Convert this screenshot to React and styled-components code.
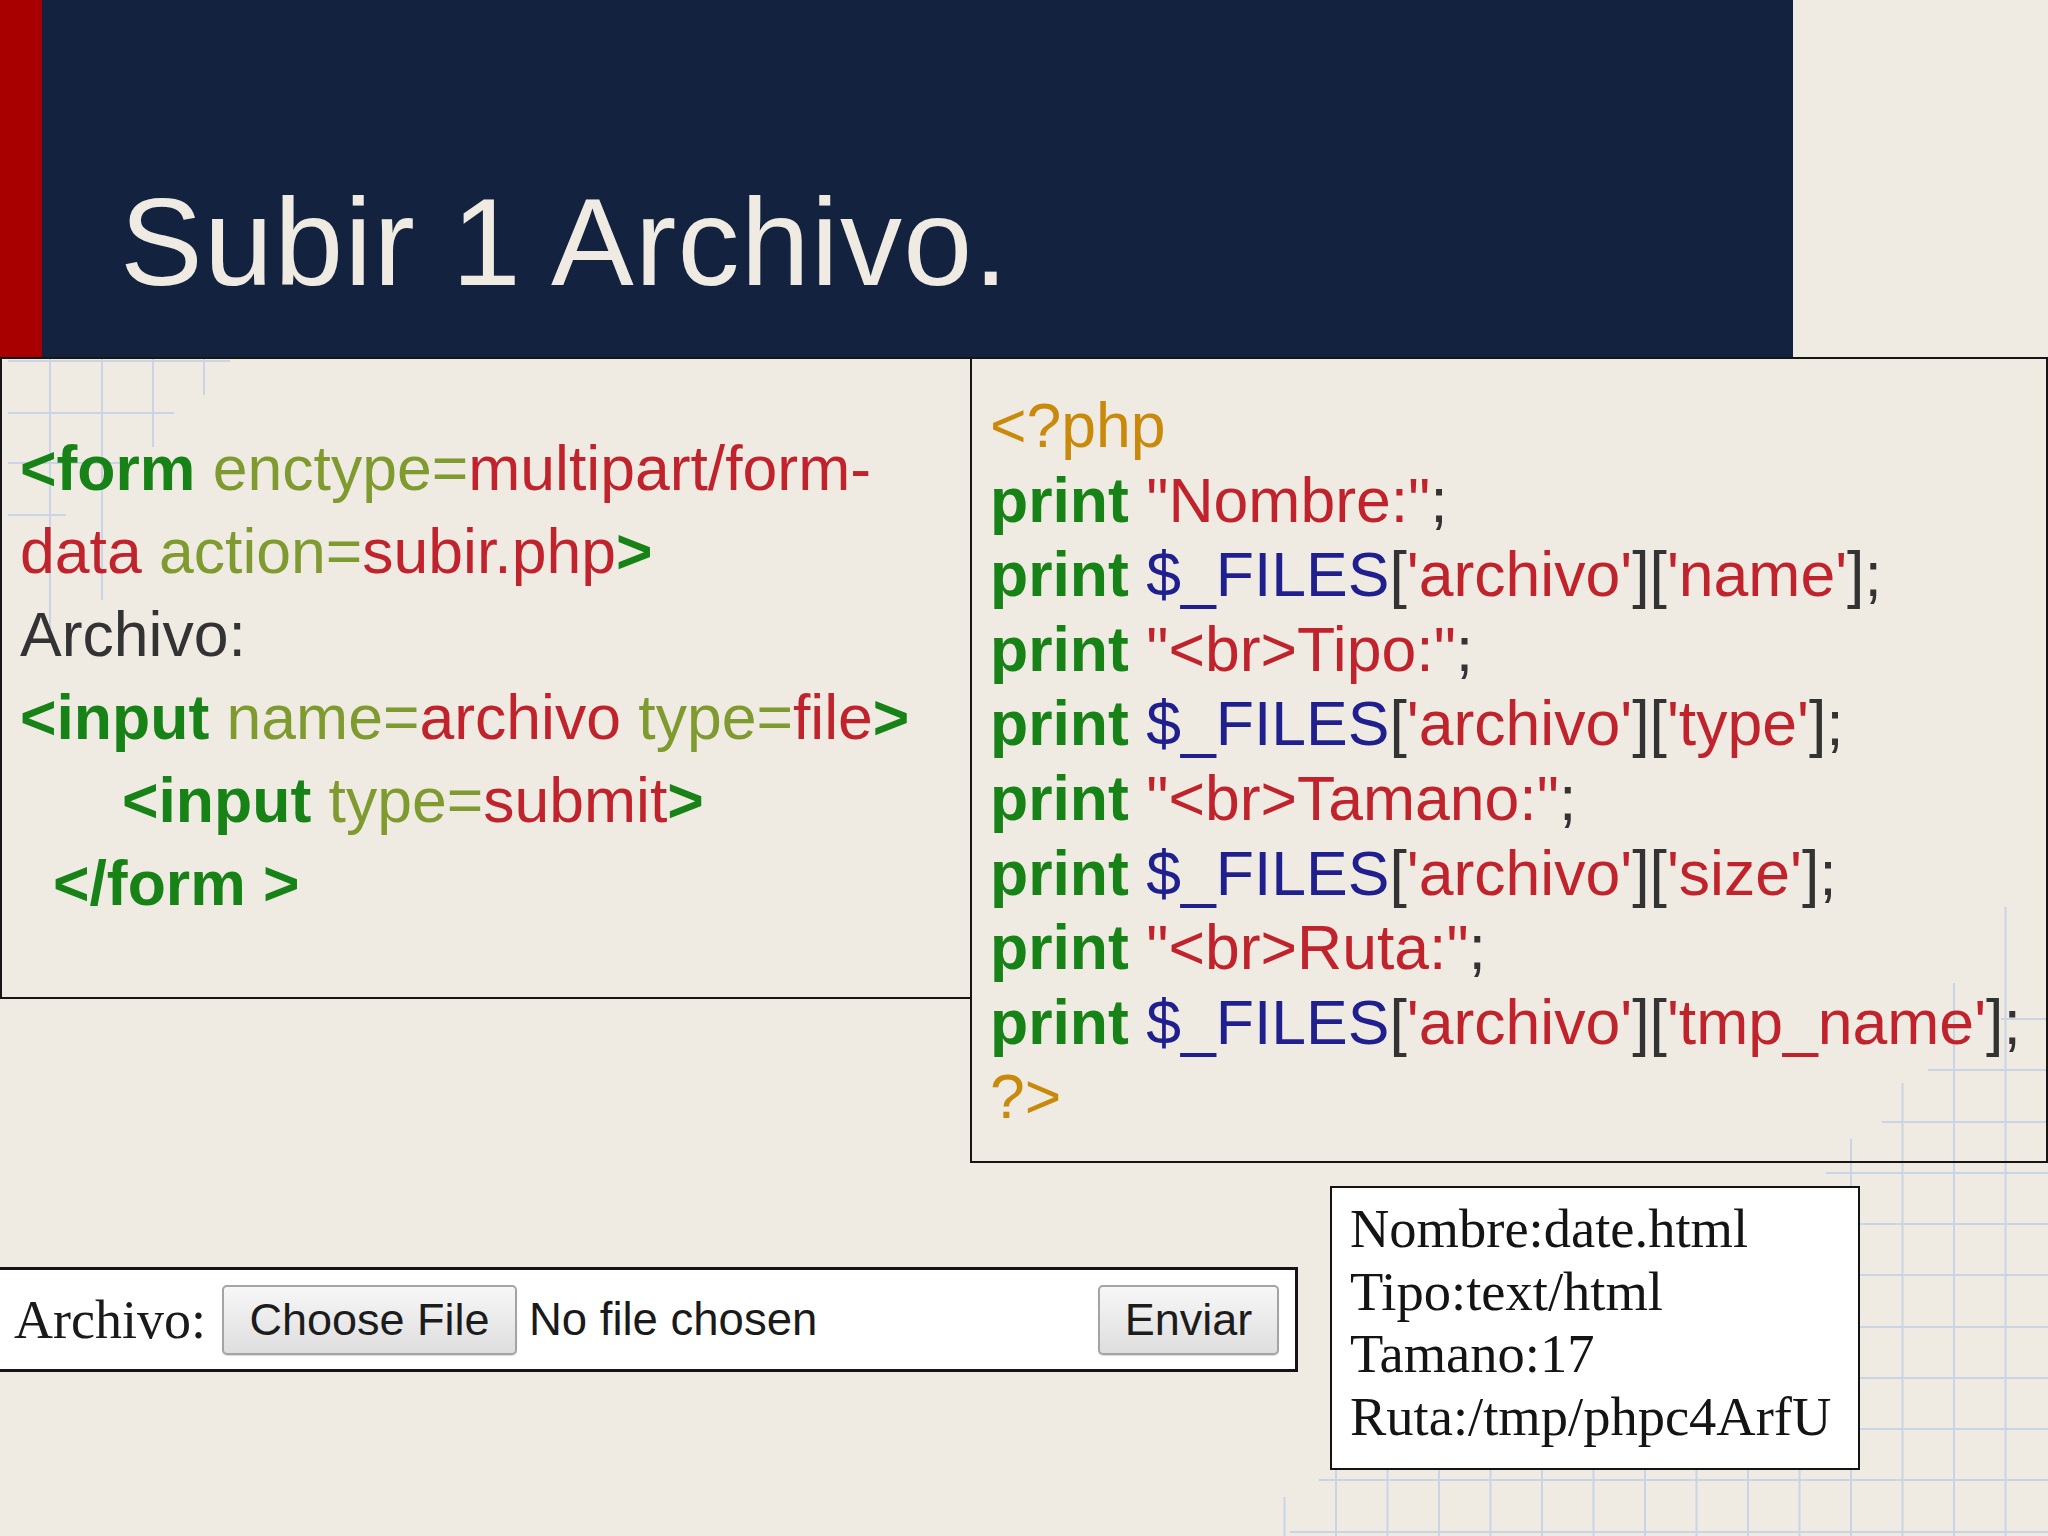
import React from 'react'
import styled, { createGlobalStyle } from 'styled-components'

const GlobalStyle = createGlobalStyle`
  html, body {
    margin: 0;
    padding: 0;
  }
  body {
    background: #efebe3;
    overflow: hidden;
  }
`

const Slide = styled.div`
  position: relative;
  width: 2048px;
  height: 1536px;
  overflow: hidden;
  background: #efebe3;
  font-family: "Liberation Sans", Arial, sans-serif;
`

// graph-paper decoration that sits behind the slide content
const Paper = styled.svg`
  position: absolute;
  left: 0;
  top: 0;
  z-index: 0;
  pointer-events: none;
`

const Content = styled.div`
  position: relative;
  z-index: 1;
  display: flex;
  flex-direction: column;
`

const Header = styled.header`
  display: flex;
  height: 357px;
`

const Accent = styled.div`
  width: 42px;
  background: #a80000;
`

const TitleBand = styled.div`
  width: 1751px;
  box-sizing: border-box;
  padding: 180px 0 0 78px;
  background: #12223f;
`

const Title = styled.h1`
  margin: 0;
  font-weight: 400;
  font-size: 124px;
  line-height: 1;
  color: #efebe2;
  letter-spacing: 1.3px;
`

const CodeRow = styled.div`
  display: flex;
  align-items: flex-start;
`

const CodeBox = styled.div`
  box-sizing: border-box;
  width: ${({ w }) => w}px;
  height: ${({ h }) => h}px;
  padding: ${({ pad }) => pad};
  border: 2px solid #161616;
  border-right: ${({ noRight }) => (noRight ? 'none' : '2px solid #161616')};
  font-size: 62.5px;
  line-height: ${({ lh }) => lh}px;
  color: #333;
`

const Line = styled.div`
  white-space: pre;
  padding-left: ${({ indent }) => indent || 0}px;
`

const Tag = styled.span`
  color: #178317;
  font-weight: 700;
`
const Attr = styled.span`
  color: #7f9a2e;
`
const Val = styled.span`
  color: #c0232b;
`
const Punct = styled.span`
  color: #333;
`
const Php = styled.span`
  color: #c98a0c;
`
const Var = styled.span`
  color: #1f1f8e;
`

const BottomRow = styled.div`
  display: flex;
  align-items: flex-start;
  gap: 32px;
`

const FormBox = styled.div`
  box-sizing: border-box;
  margin-top: 104px;
  width: 1298px;
  height: 105px;
  display: flex;
  align-items: center;
  padding: 0 16px 0 14px;
  background: #fff;
  border: 3px solid #141414;
  border-left: none;
  color: #1a1a1a;
`

const FieldLabel = styled.span`
  font-family: "Liberation Serif", "Times New Roman", serif;
  font-size: 54px;
  margin-right: 16px;
`

const FakeButton = styled.div`
  box-sizing: border-box;
  width: ${({ w }) => w}px;
  height: 70px;
  display: flex;
  align-items: center;
  justify-content: center;
  font-size: 45px;
  color: #1c1c1c;
  background: linear-gradient(#f7f7f7, #dedede);
  border: 2px solid #a4a4a4;
  border-radius: 5px;
  box-shadow: 0 1px 1px rgba(0, 0, 0, 0.15);
`

const FileStatus = styled.span`
  font-size: 45.5px;
  margin-left: 12px;
  flex: 1;
`

const ResultBox = styled.div`
  box-sizing: border-box;
  margin-top: 23px;
  width: 530px;
  height: 284px;
  padding: 10px 14px 0 18px;
  background: #fff;
  border: 2px solid #141414;
  font-family: "Liberation Serif", "Times New Roman", serif;
  font-size: 54.5px;
  line-height: 62.6px;
  color: #141414;
  white-space: nowrap;
`

const gridV = [
  [50, 359, 640],
  [102, 359, 600],
  [153, 359, 447],
  [204, 359, 395],
  [2005.5, 907, 1536],
  [1954, 983, 1536],
  [1902.5, 1083, 1536],
  [1851, 1139, 1536],
  [1799.5, 1470, 1536],
  [1748, 1470, 1536],
  [1696.5, 1470, 1536],
  [1645, 1470, 1536],
  [1593.5, 1470, 1536],
  [1542, 1470, 1536],
  [1490.5, 1470, 1536],
  [1439, 1470, 1536],
  [1387.5, 1470, 1536],
  [1336, 1470, 1536],
  [1284.5, 1497, 1536],
]

const gridH = [
  [361, 8, 230],
  [413, 8, 174],
  [463, 8, 120],
  [515, 8, 66],
  [1019, 2001, 2048],
  [1070, 1928, 2048],
  [1122, 1882, 2048],
  [1173, 1826, 2048],
  [1224, 1790, 2048],
  [1275, 1770, 2048],
  [1327, 1750, 2048],
  [1378, 1730, 2048],
  [1429, 1710, 2048],
  [1480, 1319, 2048],
  [1532, 1290, 2048],
]

const GraphPaper = () => (
  <Paper width="2048" height="1536" viewBox="0 0 2048 1536">
    <g stroke="#c3d1e6" strokeWidth="2" opacity="0.85">
      {gridV.map(([x, y1, y2], i) => (
        <line key={'v' + i} x1={x} y1={y1} x2={x} y2={y2} />
      ))}
      {gridH.map(([y, x1, x2], i) => (
        <line key={'h' + i} x1={x1} y1={y} x2={x2} y2={y} />
      ))}
    </g>
  </Paper>
)

const FilesLine = ({ field }) => (
  <Line>
    <Tag>print</Tag> <Var>$_FILES</Var>
    <Punct>[</Punct>
    <Val>'archivo'</Val>
    <Punct>][</Punct>
    <Val>'{field}'</Val>
    <Punct>];</Punct>
  </Line>
)

const StringLine = ({ text }) => (
  <Line>
    <Tag>print</Tag> <Val>"{text}"</Val>
    <Punct>;</Punct>
  </Line>
)

export default function App() {
  return (
    <Slide>
      <GlobalStyle />
      <GraphPaper />
      <Content>
        <Header>
          <Accent />
          <TitleBand>
            <Title>Subir 1 Archivo.</Title>
          </TitleBand>
        </Header>

        <CodeRow>
          <CodeBox w={970} h={642} pad="68px 0 0 18px" lh={83} noRight>
            <Line>
              <Tag>&lt;form</Tag> <Attr>enctype=</Attr>
              <Val>multipart/form-</Val>
            </Line>
            <Line>
              <Val>data</Val> <Attr>action=</Attr>
              <Val>subir.php</Val>
              <Tag>&gt;</Tag>
            </Line>
            <Line>Archivo:</Line>
            <Line>
              <Tag>&lt;input</Tag> <Attr>name=</Attr>
              <Val>archivo</Val> <Attr>type=</Attr>
              <Val>file</Val>
              <Tag>&gt;</Tag>
            </Line>
            <Line indent={102}>
              <Tag>&lt;input</Tag> <Attr>type=</Attr>
              <Val>submit</Val>
              <Tag>&gt;</Tag>
            </Line>
            <Line indent={33}>
              <Tag>&lt;/form &gt;</Tag>
            </Line>
          </CodeBox>

          <CodeBox w={1078} h={806} pad="29px 0 0 18px" lh={74.6}>
            <Line>
              <Php>&lt;?php</Php>
            </Line>
            <StringLine text="Nombre:" />
            <FilesLine field="name" />
            <StringLine text="<br>Tipo:" />
            <FilesLine field="type" />
            <StringLine text="<br>Tamano:" />
            <FilesLine field="size" />
            <StringLine text="<br>Ruta:" />
            <FilesLine field="tmp_name" />
            <Line>
              <Php>?&gt;</Php>
            </Line>
          </CodeBox>
        </CodeRow>

        <BottomRow>
          <FormBox>
            <FieldLabel>Archivo:</FieldLabel>
            <FakeButton w={295}>Choose File</FakeButton>
            <FileStatus>No file chosen</FileStatus>
            <FakeButton w={181}>Enviar</FakeButton>
          </FormBox>

          <ResultBox>
            <div>Nombre:date.html</div>
            <div>Tipo:text/html</div>
            <div>Tamano:17</div>
            <div>Ruta:/tmp/phpc4ArfU</div>
          </ResultBox>
        </BottomRow>
      </Content>
    </Slide>
  )
}
